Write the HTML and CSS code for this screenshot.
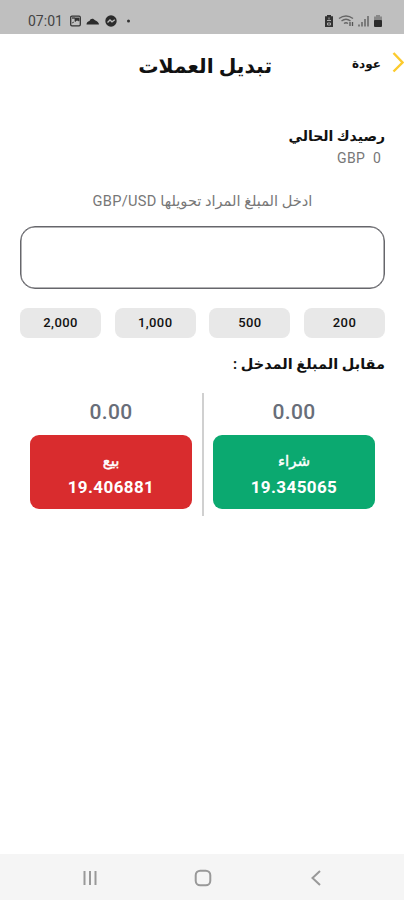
FILE: index.html
```html
<!DOCTYPE html>
<html lang="ar" dir="rtl">
<head>
<meta charset="utf-8">
<title>تبديل العملات</title>
<link rel="stylesheet" href="styles.css">
</head>
<body>
<div class="status" dir="ltr">
  <span class="clock">07:01</span>
  <svg class="notes" width="64" height="14" viewBox="0 0 64 14">
    <rect x="2.700" y="2.200" width="9.600" height="9.600" rx="1.200" fill="none" stroke="#333" stroke-width="1.300"/>
    <path d="M4 4h3v3.500l2-1.500 2 1V4zM4 9l2-1" fill="#333" stroke="#333" stroke-width=".8"/>
    <path d="M18.500 10.500c0-2 1-3 3-3.500 1-3 4-3 5.500-.8 2 .8 4 2.300 4 4.300z" fill="#2b2b2b"/>
    <circle cx="43" cy="7" r="5.700" fill="#2b2b2b"/>
    <path d="M39.500 8.500l2.500-2.500 2 1.800 2.800-2" fill="none" stroke="#bbb" stroke-width="1.300"/>
    <circle cx="60.500" cy="7" r="1.500" fill="#333"/>
  </svg>
  <svg class="signals" width="60" height="14" viewBox="0 0 60 14">
    <path d="M2 1h4v1.200h2v10.800H0V2.200h2z" fill="#333"/>
    <path d="M4 3.500v2M2 6.500h4M2.500 9h3v2h-3z" fill="none" stroke="#aaa"/>
    <path d="M14 4.500q7-5 14 0M16.500 7q4.500-3.500 9 0M19 9.500q2-1.500 4 0" fill="none" stroke="#666" stroke-width="1.400"/>
    <path d="M25 8v4M27.500 8v4" fill="none" stroke="#555" stroke-width="1.300"/>
    <path d="M34 12.500v-2M37 12.500V8M40 12.500V5M43 12.500V2" stroke="#666" stroke-width="1.500"/>
    <path d="M51 1h4v1.500h2V7h-8V2.500h2z" fill="#888"/>
    <rect x="49" y="6" width="8" height="7" rx="1" fill="#2b2b2b"/>
  </svg>
</div>
<header class="bar">
  <svg class="chevron" width="12" height="24" viewBox="0 0 12 24"><path d="M1.500 3l9 9.500-9 9" fill="none" stroke="#fccb2e" stroke-width="2.400"/></svg>
  <span class="back">عودة</span>
  <h1 class="title">تبديل العملات</h1>
</header>
<main class="content">
  <h2 class="heading balance">رصيدك الحالي</h2>
  <div class="amount" dir="ltr">GBP&nbsp; 0</div>
  <p class="prompt">ادخل المبلغ المراد تحويلها <span class="pair">GBP/USD</span></p>
  <div class="field"></div>
  <div class="presets"><span>200</span><span>500</span><span>1,000</span><span>2,000</span></div>
  <h2 class="heading equivalent">مقابل المبلغ المدخل :</h2>
  <div class="quotes">
    <section class="quote"><div class="value">0.00</div><div class="card buy"><span class="side">شراء</span><b>19.345065</b></div></section>
    <div class="divider"></div>
    <section class="quote"><div class="value">0.00</div><div class="card sell"><span class="side">بيع</span><b>19.406881</b></div></section>
  </div>
</main>
<nav class="nav" dir="ltr">
  <svg width="18" height="18" viewBox="0 0 18 18"><path d="M3.500 2v14M9 2v14M14.500 2v14" stroke="#999" stroke-width="2"/></svg>
  <svg width="18" height="18" viewBox="0 0 18 18"><rect x="1.700" y="1.700" width="14.600" height="14.600" rx="4.500" fill="none" stroke="#999" stroke-width="2"/></svg>
  <svg width="18" height="18" viewBox="0 0 18 18"><path d="M13 2L5.500 9l7.500 7" fill="none" stroke="#999" stroke-width="2"/></svg>
</nav>
</body>
</html>
```
FILE: styles.css
```css
* { box-sizing: border-box; }
body { margin: 0; width: 404px; height: 900px; display: flex; flex-direction: column; overflow: hidden; background: #fff; color: #111; font-family: Roboto, "DejaVu Sans", sans-serif; }
h1, h2, p { margin: 0; white-space: nowrap; }
.status { height: 34px; flex: none; background: #bfbfbf; display: flex; align-items: center; padding: 7px 23px 0 28px; }
.clock { width: 40px; font-size: 14px; color: #444; }
.signals { margin-left: auto; margin-right: -4px; }
.bar { height: 66px; flex: none; display: flex; align-items: flex-start; }
.chevron { margin-top: 16px; flex: none; }
.back { width: 29px; margin: 21px 11px 0 0; font-size: 12px; font-weight: 700; line-height: 18px; white-space: nowrap; }
.title { margin: 17px 80px 0 0; font-size: 20.3px; line-height: 30px; }
.content { flex: 1; padding: 24px 19px 0 20px; }
.heading { font-size: 14px; line-height: 24px; }
.amount { width: 45px; margin: 0 3px 0 0; font-size: 14px; line-height: 20px; letter-spacing: .4px; color: #777; white-space: nowrap; }
.prompt { margin-top: 23px; text-align: center; font-size: 14.6px; line-height: 20px; color: #777; }
.pair { font-size: 14.6px; letter-spacing: .3px; }
.field { height: 63px; margin-top: 15px; border: 1.500px solid #66666b; border-radius: 15px; box-shadow: inset 0 0 0 .5px #66666b; }
.presets { display: flex; justify-content: space-between; margin-top: 19px; }
.presets span { width: 81px; height: 30px; border-radius: 8px; background: #e8e8e8; text-align: center; line-height: 30px; font-size: 13px; font-weight: 500; letter-spacing: .4px; }
.equivalent { margin-top: 15px; font-size: 14.5px; }
.quotes { display: flex; justify-content: space-between; margin: 16px 10px 0; height: 123px; }
.quote { width: 162px; }
.divider { width: 2px; background: #d0d0d0; }
.value { height: 42px; line-height: 38px; text-align: center; color: #686e79; font-size: 21px; font-weight: 500; letter-spacing: .4px; }
.card { height: 74px; padding-top: 14px; border-radius: 9px; color: #fff; display: flex; flex-direction: column; align-items: center; }
.buy { background: #0ba970; }
.sell { background: #d92c2e; }
.side { font-size: 15px; line-height: 24px; -webkit-text-stroke: .4px #fff; }
.card b { font-size: 17px; line-height: 29px; letter-spacing: .4px; }
.nav { height: 46px; flex: none; background: #f5f5f5; display: flex; align-items: center; justify-content: space-between; padding: 2px 79px 0 81px; }
```
